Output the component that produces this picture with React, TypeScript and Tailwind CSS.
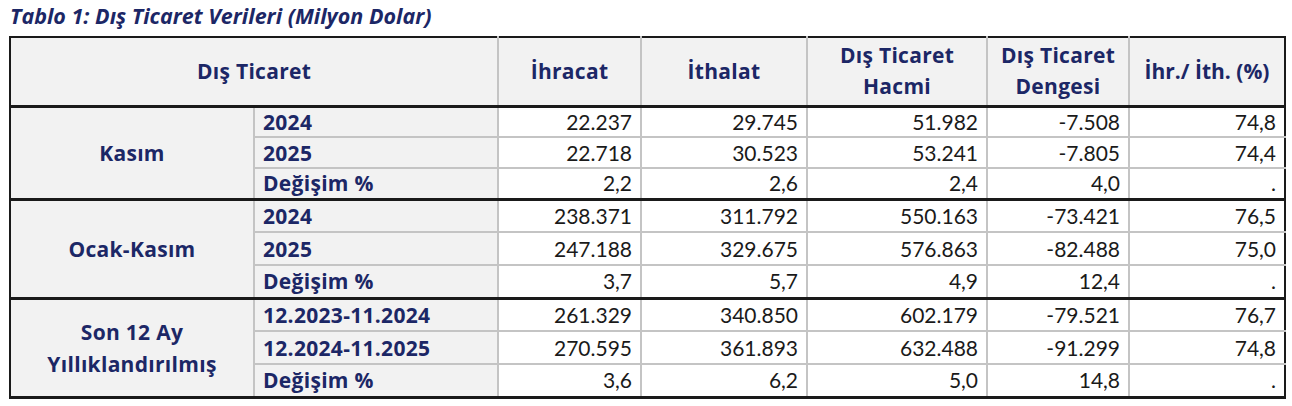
import React from "react";

type Row = { label: string; values: string[] };
type Group = { name: React.ReactNode; rowH: string; rows: Row[] };

const groups: Group[] = [
  {
    name: "Kasım",
    rowH: "h-[31px]",
    rows: [
      { label: "2024", values: ["22.237", "29.745", "51.982", "-7.508", "74,8"] },
      { label: "2025", values: ["22.718", "30.523", "53.241", "-7.805", "74,4"] },
      { label: "Değişim %", values: ["2,2", "2,6", "2,4", "4,0", "."] },
    ],
  },
  {
    name: "Ocak-Kasım",
    rowH: "h-[33px]",
    rows: [
      { label: "2024", values: ["238.371", "311.792", "550.163", "-73.421", "76,5"] },
      { label: "2025", values: ["247.188", "329.675", "576.863", "-82.488", "75,0"] },
      { label: "Değişim %", values: ["3,7", "5,7", "4,9", "12,4", "."] },
    ],
  },
  {
    name: (
      <>
        Son 12 Ay
        <br />
        Yıllıklandırılmış
      </>
    ),
    rowH: "h-[33px]",
    rows: [
      { label: "12.2023-11.2024", values: ["261.329", "340.850", "602.179", "-79.521", "76,7"] },
      { label: "12.2024-11.2025", values: ["270.595", "361.893", "632.488", "-91.299", "74,8"] },
      { label: "Değişim %", values: ["3,6", "6,2", "5,0", "14,8", "."] },
    ],
  },
];

export default function App() {
  return (
    <div
      className="w-[1292px] h-[406px] bg-white pl-[9px] pt-[3px]"
      style={{ fontFamily: "Lato, 'Noto Sans', sans-serif" }}
    >
      <h2 className="font-['Open_Sans',sans-serif] text-[21.5px] leading-[26px] font-bold italic text-[#1c2766] pl-[1px]">
        Tablo 1: Dış Ticaret Verileri (Milyon Dolar)
      </h2>
      <table className="mt-[7px] w-[1275px] border-collapse border-2 border-[#1a1a1a] table-fixed text-[21px] leading-[24px]">
        <colgroup>
          <col className="w-[244px]" />
          <col className="w-[244px]" />
          <col className="w-[143px]" />
          <col className="w-[166px]" />
          <col className="w-[180px]" />
          <col className="w-[142px]" />
          <col className="w-[156px]" />
        </colgroup>
        <thead>
          <tr className="h-[69px] bg-[#f2f2f2] text-[#1c2766] font-['Open_Sans',sans-serif] font-bold text-[21px] tracking-[0.3px] border-b-[3px] border-b-[#1a1a1a]">
            <th colSpan={2} className="border-r-2 border-r-[#c4c4c4] text-center">
              Dış Ticaret
            </th>
            <th className="border-r-2 border-r-[#c4c4c4] text-center">İhracat</th>
            <th className="border-r-2 border-r-[#c4c4c4] text-center">İthalat</th>
            <th className="border-r-2 border-r-[#c4c4c4] text-center leading-[31px]">
              Dış Ticaret
              <br />
              Hacmi
            </th>
            <th className="border-r-2 border-r-[#c4c4c4] text-center leading-[31px]">
              Dış Ticaret
              <br />
              Dengesi
            </th>
            <th className="text-center tracking-[0px]">İhr./ İth. (%)</th>
          </tr>
        </thead>
        {groups.map((g, gi) => (
          <tbody key={gi} className="border-b-[3px] border-b-[#1a1a1a]">
            {g.rows.map((r, ri) => (
              <tr
                key={ri}
                className={
                  g.rowH + " " + (ri < 2 ? "border-b-2 border-b-[#c4c4c4]" : "")
                }
              >
                {ri === 0 && (
                  <td
                    rowSpan={3}
                    className="bg-[#f2f2f2] border-r-2 border-r-[#c4c4c4] text-center font-['Open_Sans',sans-serif] text-[21px] tracking-[0.3px] font-bold text-[#1c2766] leading-[32px]"
                  >
                    {g.name}
                  </td>
                )}
                <td className="bg-[#f2f2f2] border-r-2 border-r-[#c4c4c4] pl-[8px] font-['Open_Sans',sans-serif] text-[21px] tracking-[0.3px] font-bold text-[#1c2766]">
                  {r.label}
                </td>
                {r.values.map((v, vi) => (
                  <td
                    key={vi}
                    className={
                      "text-right pr-[8px] text-[#1a1a1a] " +
                      (vi < 4 ? "border-r-2 border-r-[#c4c4c4]" : "")
                    }
                  >
                    {v}
                  </td>
                ))}
              </tr>
            ))}
          </tbody>
        ))}
      </table>
    </div>
  );
}
